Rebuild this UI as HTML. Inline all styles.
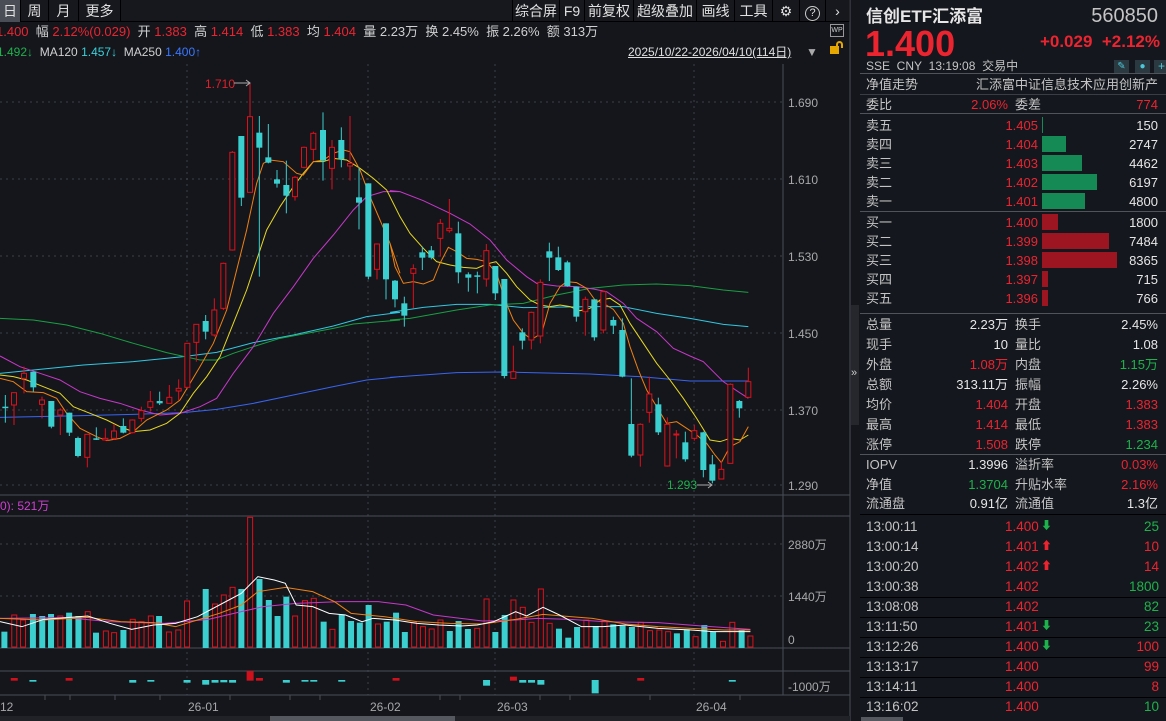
<!DOCTYPE html>
<html><head><meta charset="utf-8"><style>
*{margin:0;padding:0;box-sizing:border-box}
body{width:1166px;height:721px;background:#14161c;overflow:hidden;position:relative;font-family:"Liberation Sans","Noto Sans CJK SC",sans-serif;color:#d0d0d0;font-size:13px}
.a{position:absolute;white-space:nowrap;line-height:17px}
.r{color:#ec2430}.g{color:#1db24b}.w{color:#e6e6e6}.gr{color:#c4c4c4}
.hl{position:absolute;height:1px;background:#3a3d44}
.tab{position:absolute;top:0;height:22px;line-height:22px;font-size:14px;color:#e0e0e0;text-align:center;border-right:1px solid #000}
</style></head><body>
<div class="a" style="left:0;top:0;width:850px;height:22px;background:#16181d;border-bottom:1px solid #000"></div>
<div class="tab" style="left:0;width:21px;background:#4a4d55">日</div>
<div class="tab" style="left:21px;width:28px">周</div>
<div class="tab" style="left:49px;width:30px">月</div>
<div class="tab" style="left:79px;width:42px">更多</div>
<div class="tab" style="left:512px;width:48px;border-left:1px solid #000">综合屏</div>
<div class="tab" style="left:560px;width:25px">F9</div>
<div class="tab" style="left:585px;width:49px">前复权</div>
<div class="tab" style="left:634px;width:63px">超级叠加</div>
<div class="tab" style="left:697px;width:38px">画线</div>
<div class="tab" style="left:735px;width:38px">工具</div>
<div class="tab" style="left:773px;width:27px">⚙</div>
<div class="tab" style="left:800px;width:26px"><span style="display:inline-block;width:15px;height:15px;border:1px solid #ccc;border-radius:50%;line-height:13px;font-size:11px;margin-top:3px">?</span></div>
<div class="tab" style="left:826px;width:24px">›</div>
<div class="a" style="left:-4px;top:23px;font-size:13px;line-height:17px"><span class="r">1.400</span>&nbsp;&nbsp;幅 <span class="r">2.12%(0.029)</span>&nbsp;&nbsp;开 <span class="r">1.383</span>&nbsp;&nbsp;高 <span class="r">1.414</span>&nbsp;&nbsp;低 <span class="r">1.383</span>&nbsp;&nbsp;均 <span class="r">1.404</span>&nbsp;&nbsp;量 2.23万&nbsp;&nbsp;换 2.45%&nbsp;&nbsp;振 2.26%&nbsp;&nbsp;额 313万</div>
<div class="a" style="left:830px;top:24px;width:14px;height:13px;border:1px solid #999;font-size:7px;line-height:11px;text-align:center;color:#ccc">WP</div>
<div class="a" style="left:-3px;top:44px;font-size:12px;line-height:16px"><span class="g">1.492↓</span>&nbsp; MA120 <span style="color:#3ad0d8">1.457↓</span>&nbsp; MA250 <span style="color:#3a78ff">1.400↑</span></div>
<div class="a" style="left:628px;top:44px;font-size:12px;line-height:16px;text-decoration:underline;color:#e0e0e0">2025/10/22-2026/04/10(114日)</div>
<div class="a" style="left:806px;top:44px;font-size:12px;color:#aaa">▼</div>
<div class="a" style="left:830px;top:46px;width:9px;height:8px;background:#e6a800;"></div>
<div class="a" style="left:836px;top:41px;width:7px;height:7px;border:2px solid #e6a800;border-bottom:none;border-radius:4px 4px 0 0"></div>

<svg class="a" style="left:0;top:0" width="860" height="721" id="ch">
<g stroke="#3d4048" stroke-dasharray="2,4" stroke-width="1">
<line x1="0" y1="102" x2="783" y2="102"/><line x1="0" y1="179" x2="783" y2="179"/><line x1="0" y1="256" x2="783" y2="256"/><line x1="0" y1="333" x2="783" y2="333"/><line x1="0" y1="410" x2="783" y2="410"/><line x1="0" y1="485" x2="783" y2="485"/>
<line x1="0" y1="544" x2="783" y2="544"/><line x1="0" y1="596" x2="783" y2="596"/>
<line x1="187" y1="64" x2="187" y2="695"/><line x1="368" y1="64" x2="368" y2="695"/><line x1="495" y1="64" x2="495" y2="695"/><line x1="694" y1="64" x2="694" y2="695"/>
</g>
<g stroke="#4a4d55" stroke-width="1">
<line x1="0" y1="495" x2="850" y2="495"/><line x1="0" y1="516" x2="850" y2="516"/><line x1="0" y1="648" x2="850" y2="648"/><line x1="0" y1="671" x2="850" y2="671"/><line x1="0" y1="695" x2="850" y2="695"/>
<line x1="783" y1="64" x2="783" y2="695"/><line x1="850" y1="0" x2="850" y2="721"/>
</g>
<g id="cd"></g>
<g font-size="12" fill="#a8a8a8" font-family="Liberation Sans,sans-serif">
<text x="788" y="107">1.690</text><text x="788" y="184">1.610</text><text x="788" y="261">1.530</text><text x="788" y="338">1.450</text><text x="788" y="415">1.370</text><text x="788" y="490">1.290</text>
<text x="788" y="549">2880万</text><text x="788" y="601">1440万</text><text x="788" y="644">0</text><text x="788" y="691">-1000万</text>
<text x="0" y="711">12</text><text x="188" y="711">26-01</text><text x="370" y="711">26-02</text><text x="497" y="711">26-03</text><text x="696" y="711">26-04</text>
</g>
<text x="205" y="88" font-size="12" fill="#e0202a">1.710</text>
<line x1="234" y1="83" x2="250" y2="83" stroke="#aaa"/><path d="M246 80 L250 83 L246 86" stroke="#aaa" fill="none"/>
<text x="667" y="489" font-size="12" fill="#1db24b">1.293</text>
<line x1="697" y1="485" x2="712" y2="485" stroke="#aaa"/><path d="M708 482 L712 485 L708 488" stroke="#aaa" fill="none"/>
<text x="0" y="510" font-size="12" fill="#d040d0">0): 521万</text>
<rect x="0" y="716" width="850" height="5" fill="#202228"/>
<rect x="270" y="716" width="185" height="5" fill="#55585f"/>
<rect x="851" y="305" width="8" height="120" fill="#25272d"/>
<text x="851" y="376" font-size="11" fill="#ccc">»</text>
</svg>

<div class="a" style="left:860px;top:0;width:306px;height:721px;background:#14171d"></div>
<div class="a w" style="left:866px;top:7px;font-size:17px;line-height:20px;font-weight:bold">信创ETF汇添富</div>
<div class="a gr" style="right:8px;top:5px;font-size:20px;line-height:22px">560850</div>
<div class="a r" style="left:865px;top:24px;font-size:36px;font-weight:bold;line-height:40px">1.400</div>
<div class="a r" style="right:6px;top:32px;font-size:17px;line-height:20px;font-weight:bold">+0.029&nbsp;&nbsp;+2.12%</div>
<div class="a gr" style="left:866px;top:58px;font-size:12px;line-height:16px">SSE&nbsp;&nbsp;CNY&nbsp;&nbsp;13:19:08&nbsp;&nbsp;交易中</div>
<div class="a" style="left:1114px;top:60px;width:15px;height:13px;background:#2a3a40;color:#4fc6d8;font-size:10px;line-height:13px;text-align:center">✎</div>
<div class="a" style="left:1135px;top:60px;width:15px;height:13px;background:#2a3a40;color:#4fc6d8;font-size:10px;line-height:13px;text-align:center">●</div>
<div class="a" style="left:1154px;top:60px;width:15px;height:13px;background:#2a3a40;color:#4fc6d8;font-size:12px;line-height:13px;text-align:center">+</div>
<div class="hl" style="left:860px;top:73px;width:306px;background:#50535a"></div>
<div class="a gr" style="left:866px;top:76px">净值走势</div>
<div class="a gr" style="right:8px;top:76px">汇添富中证信息技术应用创新产</div>
<div class="hl" style="left:860px;top:94px;width:306px"></div>
<div class="a gr" style="left:866px;top:96px">委比</div><div class="a r" style="right:158px;top:96px">2.06%</div>
<div class="a gr" style="left:1015px;top:96px">委差</div><div class="a r" style="right:8px;top:96px">774</div>
<div class="hl" style="left:860px;top:113px;width:306px;background:#50535a"></div>
<div id="ob"></div>
<div class="hl" style="left:860px;top:211px;width:306px;background:#50535a"></div>
<div class="hl" style="left:860px;top:313px;width:306px;background:#50535a"></div>
<div id="st"></div>
<div class="hl" style="left:860px;top:454px;width:306px;background:#50535a"></div>
<div class="hl" style="left:860px;top:514px;width:306px;background:#000"></div>
<div id="tr"></div>
<div class="a" style="left:861px;top:717px;width:42px;height:4px;background:#55585f"></div>

<script>
function el(t,a){var e=document.createElementNS('http://www.w3.org/2000/svg',t);for(var k in a)e.setAttribute(k,a[k]);return e}
var g=document.getElementById('cd');
var R='#e0101a',C='#3ccfcf';
var A=[[16,1010,1014,975,1058,'c'],[42,968,1005,968,1065,'r'],[72,910,925,890,970,'r'],[100,905,952,905,965,'c'],[126,990,1003,980,1045,'r'],[154,993,1070,993,1075,'c'],[181,1020,1035,1015,1095,'r'],[208,1028,1088,1028,1098,'c'],[234,1104,1158,1100,1162,'c'],[262,1093,1162,1093,1192,'r'],[289,1105,1108,1072,1110,'c'],[316,1105,1110,1075,1112,'r'],[342,1083,1105,1062,1110,'r'],[370,1068,1088,1045,1090,'c'],[397,1050,1088,1048,1090,'r'],[424,1022,1045,1010,1055,'r'],[451,995,1012,963,1025,'r'],[479,993,1000,965,1005,'c'],[508,982,1000,945,1000,'r'],[536,955,963,928,990,'r'],[562,820,952,820,955,'r'],[589,763,817,763,875,'r'],[617,753,785,735,808,'c'],[643,720,795,685,800,'r'],[670,580,715,578,720,'r'],[697,247,540,243,542,'r'],[724,198,383,198,408,'c'],[750,140,367,40,367,'r'],[778,188,233,138,620,'c'],[805,262,278,162,280,'c'],[831,328,341,300,353,'c'],[859,345,377,272,430,'c'],[885,322,380,318,392,'r'],[912,232,292,230,295,'r'],[940,190,238,185,272,'r'],[969,180,272,127,332,'c'],[996,232,295,210,358,'r'],[1024,210,268,172,292,'c'],[1050,280,288,138,332,'r'],[1077,382,398,292,478,'c'],[1105,340,620,340,628,'c'],[1131,522,598,520,628,'r'],[1158,460,628,460,688,'c'],[1185,632,688,630,712,'c']];
var B=[[43,700,737,680,770,'c'],[70,596,610,583,715,'r'],[97,547,563,530,600,'c'],[124,541,563,528,568,'c'],[151,460,505,447,560,'r'],[178,475,482,387,488,'r'],[205,490,607,455,640,'c'],[235,613,623,607,665,'c'],[262,616,620,605,670,'c'],[289,542,627,522,650,'r'],[316,588,670,588,690,'c'],[343,627,918,627,925,'c'],[370,905,925,827,925,'r'],[397,787,812,775,838,'c'],[424,727,810,725,838,'r'],[451,637,798,628,820,'r'],[478,544,563,518,633,'c'],[505,562,600,530,603,'c'],[532,577,648,572,650,'c'],[559,650,740,650,755,'c'],[586,688,725,680,797,'r'],[613,688,802,688,812,'c'],[640,665,780,662,790,'r'],[670,750,767,740,792,'c'],[697,780,920,745,922,'c'],[724,1062,1157,925,1162,'c'],[751,1063,1155,1060,1190,'r'],[778,972,1027,920,1058,'r'],[805,1003,1087,983,1095,'c'],[832,1063,1188,1042,1190,'r'],[859,1092,1094,1080,1165,'r'],[886,1117,1168,1085,1175,'c'],[913,1082,1105,1065,1112,'r'],[940,1087,1200,1085,1222,'c'],[967,1183,1232,1155,1240,'c'],[994,1198,1227,1172,1228,'r'],[1021,943,1180,940,1180,'r'],[1048,993,1015,990,1043,'c'],[1075,935,982,893,982,'r']];
function cand(d,off){var x=d[0]/3+off,t=d[1]/3+70,b=d[2]/3+70,h=d[3]/3+70,l=d[4]/3+70,col=d[5]=='r'?R:C;
g.appendChild(el('line',{x1:x,y1:h,x2:x,y2:l,stroke:col,'stroke-width':1}));
if(d[5]=='r')g.appendChild(el('rect',{x:x-2.5,y:t,width:5,height:Math.max(b-t,1),fill:'#14161c',stroke:col,'stroke-width':1}));
else g.appendChild(el('rect',{x:x-3,y:t,width:6,height:Math.max(b-t,1.5),fill:col}));}
function line(pts,col,f){var s=pts.map(function(p){return f(p).join(',')}).join(' ');g.appendChild(el('polyline',{points:s,fill:'none',stroke:col,'stroke-width':1}))}
function z7(p){return[p[0]/3,p[1]/3+70]}function z8(p){return[p[0]/3+390,p[1]/3+70]}
function mix(a,b,col){line(a.map(z7).concat(b.map(z8)),col,function(p){return p})}
mix([[0,1042],[200,1038],[400,1033],[550,1028],[650,1018],[760,1000],[880,975],[1000,950],[1100,930],[1200,920]],[[0,922],[200,908],[330,906],[600,912],[750,920],[900,933],[1075,933]],'#3a64f0');
mix([[0,910],[100,900],[250,885],[400,875],[550,860],[650,847],[760,818],[880,795],[1000,768],[1100,740],[1200,727]],[[0,727],[100,712],[200,703],[300,703],[400,713],[600,710],[700,710],[800,730],[900,745],[1000,763],[1075,770]],'#30c8e0');
mix([[0,745],[100,750],[200,765],[300,790],[400,820],[500,848],[600,870],[650,870],[700,850],[760,830],[840,805],[920,790],[1000,775],[1060,762],[1200,750]],[[0,750],[60,745],[200,720],[300,705],[400,700],[500,675],[600,655],[700,645],[800,642],[900,647],[1000,660],[1075,667]],'#18a040');
mix([[0,858],[60,890],[120,910],[180,930],[240,965],[300,985],[360,1000],[420,1020],[480,1035],[540,1030],[600,1010],[650,985],[700,910],[760,830],[820,730],[880,650],[940,565],[1000,495],[1060,420],[1100,380],[1150,365],[1200,365]],[[0,362],[30,365],[100,392],[180,430],[240,462],[300,510],[350,570],[410,620],[440,640],[500,648],[560,650],[610,657],[650,665],[700,700],[740,745],[800,785],[850,835],[900,858],[940,875],[1000,935],[1040,962],[1075,985]],'#c838c8');
mix([[0,915],[40,920],[80,930],[130,950],[180,970],[220,1010],[270,1030],[320,1050],[360,1070],[400,1085],[450,1080],[500,1060],[540,1030],[580,970],[620,920],[660,860],[700,760],[740,660],[770,570],[800,480],[840,410],[880,350],[910,310],[940,275],[970,275],[1000,265],[1040,270],[1080,295],[1120,325],[1160,360],[1200,440]],[[0,380],[30,440],[60,490],[100,535],[140,575],[180,585],[220,592],[260,595],[290,582],[318,575],[350,610],[380,650],[420,690],[450,705],[480,710],[510,705],[540,710],[570,722],[600,715],[630,690],[660,685],[690,705],[720,760],[760,820],[800,880],[840,930],[880,985],[920,1045],[960,1110],[990,1115],[1020,1105],[1050,1110],[1075,1095]],'#e8d820');
mix([[0,925],[40,935],[80,965],[130,968],[170,985],[200,1030],[240,1075],[290,1100],[320,1112],[360,1105],[400,1085],[440,1050],[500,1020],[540,990],[570,940],[600,890],[640,820],[680,720],[710,600],[740,480],[770,340],[790,280],[810,270],[850,275],[890,310],[910,315],[940,275],[970,270],[1000,250],[1030,240],[1050,245],[1080,300],[1110,380],[1140,450],[1170,520],[1200,610]],[[0,520],[15,590],[40,640],[70,635],[100,642],[130,630],[150,580],[175,532],[200,545],[230,565],[260,568],[290,575],[320,610],[345,690],[370,750],[400,790],[425,808],[455,790],[480,700],[510,650],[530,635],[560,638],[590,655],[615,690],[640,700],[670,718],[700,760],[720,830],[745,900],[770,960],[800,1010],[830,1060],[860,1055],[890,1075],[920,1095],[950,1120],[975,1155],[994,1178],[1020,1130],[1050,1115],[1075,1070]],'#f08010');
A.forEach(function(d){cand(d,0)});B.forEach(function(d){cand(d,390)});
var K=1.823;
var V=[[8,'c',455],[26,'r',405],[42,'r',420],[60,'c',402],[77,'c',408],[93,'c',402],[110,'r',408],[126,'c',398],[143,'c',408],[160,'r',395],[175,'c',458],[193,'r',453],[208,'r',458],[225,'c',450],[242,'r',418],[258,'r',425],[275,'r',408],[290,'c',408],[308,'r',456],[325,'r',450],[341,'r',363],[375,'c',327],[392,'r',372],[408,'r',345],[424,'r',322],[440,'c',327],[456,'r',112],[473,'c',297],[490,'c',360],[506,'c',408],[522,'c',350],[538,'r',408],[556,'r',362],[572,'r',355],[590,'c',425],[606,'r',448],[623,'c',403],[640,'c',423],[656,'c',428],[672,'c',375],[689,'r',432],[705,'c',425],[722,'c',398],[738,'c',456],[755,'r',428],[771,'r',440],[787,'r',447],[803,'r',420],[820,'c',453],[836,'c',423],[853,'c',447],[870,'r',445],[887,'r',357],[903,'c',456],[920,'c',405],[936,'r',360],[953,'r',382],[969,'r',427],[986,'r',327],[1002,'r',430],[1019,'c',446],[1036,'c',473],[1052,'c',441],[1069,'r',420],[1086,'c',438],[1102,'r',423],[1118,'c',433],[1135,'c',437],[1152,'c',441],[1168,'r',427],[1185,'r',452],[1202,'r',450],[1218,'r',455],[1234,'c',460],[1252,'c',448],[1268,'r',470],[1284,'c',435],[1300,'c',455],[1318,'r',484],[1335,'r',427],[1352,'c',450],[1368,'r',468]];
V.forEach(function(v){var x=v[0]/K,t=480+v[2]/3,b=647;
if(v[1]=='r')g.appendChild(el('rect',{x:x-2.5,y:t,width:5,height:b-t,fill:'#14161c',stroke:R}));
else g.appendChild(el('rect',{x:x-3,y:t,width:6,height:b-t+1,fill:C}));});
function zv(p){return[p[0]/K,480+p[1]/3]}
line([[0,415],[120,413],[200,425],[300,430],[380,418],[440,395],[480,380],[540,370],[620,365],[690,365],[740,375],[790,405],[840,415],[880,423],[940,420],[980,415],[1040,418],[1100,425],[1200,428],[1280,438],[1368,448]],'#c838c8',zv);
line([[0,415],[80,420],[160,412],[220,425],[280,428],[320,440],[360,420],[400,400],[440,375],[470,335],[520,322],[570,335],[610,365],[640,400],[700,410],[760,425],[820,430],[880,432],[940,418],[990,403],[1040,410],[1080,415],[1140,432],[1200,440],[1260,445],[1320,450],[1368,450]],'#f08010',zv);
line([[0,425],[40,440],[80,418],[160,408],[200,430],[240,448],[280,435],[320,430],[360,410],[400,375],[440,340],[470,290],[500,300],[520,310],[540,375],[570,380],[600,400],[630,405],[660,425],[680,415],[720,420],[760,430],[800,435],[840,438],[870,435],[900,425],[940,395],[960,408],[990,382],[1020,405],[1060,440],[1100,440],[1140,435],[1200,445],[1260,450],[1300,455],[1368,455]],'#ffffff',zv);
var I=[[26,'r',594,602],[60,'c',600,605],[126,'r',594,602],[242,'c',600,608],[275,'c',600,605],[341,'c',600,608],[375,'c',600,614],[392,'c',600,608],[408,'c',600,607],[424,'c',600,608],[456,'r',573,602],[473,'r',594,602],[522,'c',600,608],[556,'c',600,605],[572,'c',600,605],[623,'c',600,605],[722,'r',594,602],[887,'c',600,617],[936,'r',590,602],[953,'c',600,608],[969,'c',600,608],[986,'c',600,614],[1085,'c',600,640],[1168,'r',594,602],[1335,'c',600,605]];
I.forEach(function(v){g.appendChild(el('rect',{x:v[0]/K-3.5,y:480+v[2]/3,width:7,height:(v[3]-v[2])/3,fill:v[1]=='r'?'#d0101a':C}))});
[45,70,115,160,230,290,320,440,460,540,570,650,740].forEach(function(x){g.appendChild(el('line',{x1:x,y1:695,x2:x,y2:700,stroke:'#4a4d55'}))});

var ob=document.getElementById('ob'),h='';
var S=[['卖五','1.405',150,1],['卖四','1.404',2747,24],['卖三','1.403',4462,40],['卖二','1.402',6197,55],['卖一','1.401',4800,43]];
var Bu=[['买一','1.400',1800,16],['买二','1.399',7484,67],['买三','1.398',8365,75],['买四','1.397',715,6],['买五','1.396',766,6]];
S.forEach(function(r,i){var y=117+i*19;h+='<div class="a gr" style="left:866px;top:'+y+'px">'+r[0]+'</div><div class="a r" style="right:128px;top:'+y+'px">'+r[1]+'</div><div class="a" style="left:1042px;top:'+y+'px;width:'+r[3]+'px;height:16px;background:#168a55"></div><div class="a w" style="right:8px;top:'+y+'px">'+r[2]+'</div>'});
Bu.forEach(function(r,i){var y=214+i*19;h+='<div class="a gr" style="left:866px;top:'+y+'px">'+r[0]+'</div><div class="a r" style="right:128px;top:'+y+'px">'+r[1]+'</div><div class="a" style="left:1042px;top:'+y+'px;width:'+r[3]+'px;height:16px;background:#9c1520"></div><div class="a w" style="right:8px;top:'+y+'px">'+r[2]+'</div>'});
ob.innerHTML=h;
var T=[['总量','2.23万','w','换手','2.45%','w'],['现手','10','w','量比','1.08','w'],['外盘','1.08万','r','内盘','1.15万','g'],['总额','313.11万','w','振幅','2.26%','w'],['均价','1.404','r','开盘','1.383','r'],['最高','1.414','r','最低','1.383','r'],['涨停','1.508','r','跌停','1.234','g']];
h='';T.forEach(function(r,i){var y=316+i*20;h+='<div class="a gr" style="left:866px;top:'+y+'px">'+r[0]+'</div><div class="a '+r[2]+'" style="right:158px;top:'+y+'px">'+r[1]+'</div><div class="a gr" style="left:1015px;top:'+y+'px">'+r[3]+'</div><div class="a '+r[5]+'" style="right:8px;top:'+y+'px">'+r[4]+'</div>'});
var T2=[['IOPV','1.3996','w','溢折率','0.03%','r'],['净值','1.3704','g','升贴水率','2.16%','r'],['流通盘','0.91亿','w','流通值','1.3亿','w']];
T2.forEach(function(r,i){var y=456+i*19.5;h+='<div class="a gr" style="left:866px;top:'+y+'px">'+r[0]+'</div><div class="a '+r[2]+'" style="right:158px;top:'+y+'px">'+r[1]+'</div><div class="a gr" style="left:1015px;top:'+y+'px">'+r[3]+'</div><div class="a '+r[5]+'" style="right:8px;top:'+y+'px">'+r[4]+'</div>'});
document.getElementById('st').innerHTML=h;
var TR=[['13:00:11','1.400','d','25','g'],['13:00:14','1.401','u','10','r'],['13:00:20','1.402','u','14','r'],['13:00:38','1.402','','1800','g'],['13:08:08','1.402','','82','g'],['13:11:50','1.401','d','23','g'],['13:12:26','1.400','d','100','r'],['13:13:17','1.400','','99','r'],['13:14:11','1.400','','8','r'],['13:16:02','1.400','','10','g']];
h='';TR.forEach(function(r,i){var y=518+i*20;h+='<div class="a gr" style="left:866px;top:'+y+'px;font-size:13.5px">'+r[0]+'</div><div class="a r" style="left:1005px;top:'+y+'px;font-size:13.5px">'+r[1]+'</div>';
if(r[2])h+='<div class="a '+(r[2]=='d'?'g':'r')+'" style="left:1041px;top:'+y+'px;font-size:11px;font-weight:bold">'+(r[2]=='d'?'⬇':'⬆')+'</div>';
h+='<div class="a '+r[4]+'" style="right:7px;top:'+y+'px;font-size:13.5px">'+r[3]+'</div>';
if(i>=3&&i<9)h+='<div class="hl" style="left:860px;top:'+(y+19)+'px;width:306px;background:#000"></div>';});
document.getElementById('tr').innerHTML=h;
</script>
</body></html>
